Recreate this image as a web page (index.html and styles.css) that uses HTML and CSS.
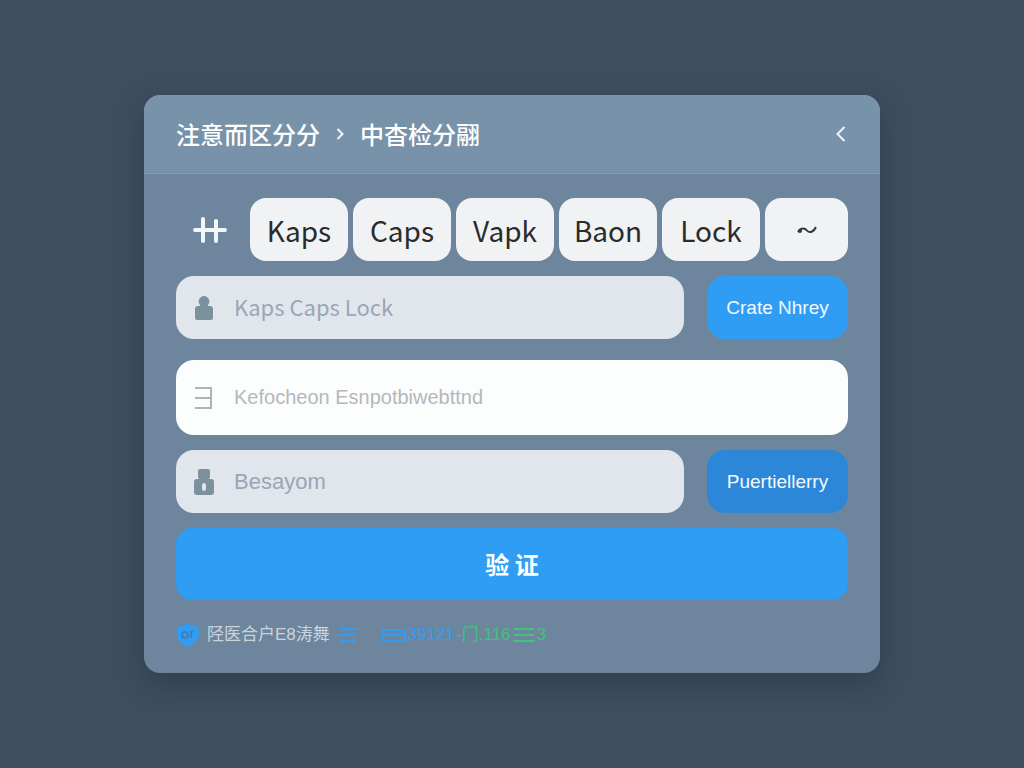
FILE: index.html
```html
<!DOCTYPE html>
<html lang="zh-CN">
<head>
    <meta charset="UTF-8">
    <meta name="viewport" content="width=device-width, initial-scale=1.0">
    <title>验证</title>
    <link rel="stylesheet" href="styles.css">
</head>
<body>
    <main class="card">
        <header class="card-header">
            <nav class="breadcrumb">
                <a href="#">注意而区分分</a>
                <svg class="separator" width="8" height="12" viewBox="0 0 8 12"><path d="M1.500 1l5 5-5 5"/></svg>
                <a href="#">中杳检分翮</a>
            </nav>
            <button class="back" type="button" aria-label="返回">
                <svg width="10" height="16" viewBox="0 0 10 16"><path d="M8.500 1L1.500 8l7 7"/></svg>
            </button>
        </header>

        <form class="card-body">
            <div class="keys">
                <svg class="keys-icon" width="34" height="26" viewBox="0 0 34 26"><path d="M2 13h30M10 2v22M23 4v20"/></svg>
                <button class="key" type="button">Kaps</button>
                <button class="key" type="button">Caps</button>
                <button class="key" type="button">Vapk</button>
                <button class="key" type="button">Baon</button>
                <button class="key" type="button">Lock</button>
                <button class="key key-small" type="button" aria-label="~">
                    <svg width="22" height="12" viewBox="0 0 22 12"><path d="M2 8C5 3 9 4 11 6.500S17 9 20 3"/><circle cx="4" cy="7" r="1"/></svg>
                </button>
            </div>

            <div class="row">
                <div class="field">
                    <label for="name" aria-label="Kaps Caps Lock">
                        <svg width="20" height="26" viewBox="0 0 20 26"><path d="M10 1a5.500 5.500 0 0 1 4 9V11h2q3 0 3 3v9q0 2-2 2H3q-2 0-2-2v-9q0-3 3-3h2v-1a5.500 5.500 0 0 1 4-9z"/></svg>
                    </label>
                    <input class="name-input" id="name" type="text" placeholder="Kaps Caps Lock">
                </div>
                <button class="side-button" type="button">Crate Nhrey</button>
            </div>

            <div class="field field-large">
                <label for="detail" aria-label="Detail">
                    <svg class="outline" width="20" height="24" viewBox="0 0 20 24"><path d="M1 2h16v20H1M1 12h16"/></svg>
                </label>
                <input id="detail" type="text" placeholder="Kefocheon Esnpotbiwebttnd">
            </div>

            <div class="row">
                <div class="field">
                    <label for="pass" aria-label="Besayom">
                        <svg width="20" height="26" viewBox="0 0 20 26"><path fill-rule="evenodd" d="M6 0h8q2 0 2 2v6q0 1-1 2h2q3 0 3 3v10q0 3-3 3H3q-3 0-3-3V13q0-3 3-3h2q-1-1-1-2V2q0-2 2-2zM10 14q-2 0-2 3v2q0 3 2 3t2-3v-2q0-3-2-3z"/></svg>
                    </label>
                    <input id="pass" type="text" placeholder="Besayom">
                </div>
                <button class="side-button side-button-dark" type="button">Puertiellerry</button>
            </div>

            <button class="submit" type="submit">验 证</button>

            <div class="status">
                <svg width="23" height="24" viewBox="0 0 23 24"><path fill="#2f9df3" d="M1 4q6 0 9-3 3-1 5 1 4 0 7 1 2 9-1 14-3 4-9 7-5-3-10-7-2-6-1-13z"/><path fill="none" stroke="#3c80bd" stroke-width="2" d="M9 9a3 3 0 1 0 0 6 3 3 0 0 0 0-6zM15 15V9l2-1"/></svg>
                <span class="status-text">陉医合户E8涛舞</span>
                <svg class="lines" width="20" height="14" viewBox="0 0 20 14"><path d="M2 1h18M0 7h18M2 13h16"/></svg>
                <span class="code">
                    <svg width="24" height="15" viewBox="0 0 24 15"><path d="M1 2h22M0 7h24M0 13h24M1 1v12M23 1v12"/></svg>
                    <span>39121</span>
                </span>
                <span class="code code-green">
                    <span>-门.116</span>
                    <svg width="22" height="14" viewBox="0 0 22 14"><path d="M1 1h20M1 7h20M0 13h22"/></svg>
                    <span>3</span>
                </span>
            </div>
        </form>
    </main>
</body>
</html>
```
FILE: styles.css
```css
* { box-sizing: border-box; }
body {
    margin: 0; min-height: 100vh; padding: 24px;
    display: flex; justify-content: center; align-items: center;
    background: #3d4e60;
    font-family: "Liberation Sans", "Noto Sans CJK SC", sans-serif;
}
button, input { font: inherit; border: 0; }
button { cursor: pointer; }
svg { display: block; flex: none; }

.card {
    width: 100%; max-width: 736px; border-radius: 16px; overflow: hidden;
    background: #6d869d; box-shadow: 0 10px 28px rgba(25, 35, 50, 0.35);
}
.card-header {
    display: flex; justify-content: space-between; align-items: center;
    height: 79px; padding: 0 32px;
    background: #7892a9; border-bottom: 1px solid #819bb0;
}
.breadcrumb {
    display: flex; align-items: center; gap: 16px;
    font: 500 24px/36px "Noto Sans CJK SC", sans-serif;
}
.breadcrumb a { color: #fff; text-decoration: none; }
.separator, .back svg { fill: none; stroke: #eef4fa; stroke-width: 2; }
.back { padding: 2px; background: none; }

.card-body { padding: 24px 32px 26px; }
.keys { display: flex; align-items: center; gap: 5px; margin-bottom: 15px; }
.keys-icon { margin: 0 18px 0 17px; fill: none; stroke: #f3f6f8; stroke-width: 4; stroke-linecap: round; }
.key {
    display: flex; justify-content: center; align-items: center;
    flex: 98 1 0; min-width: 0; height: 63px; padding: 0;
    border-radius: 16px; background: #f1f2f3; color: #292b2d;
    font: 28px/40px "Noto Sans CJK SC", sans-serif;
}
.key-small { flex-grow: 83; }
.key svg { fill: #34383b; stroke: #34383b; stroke-width: 2; }
.key svg path { fill: none; }

.row { display: flex; gap: 23px; }
.field {
    display: flex; align-items: center; gap: 20px; flex: 1; min-width: 0;
    height: 63px; padding: 0 18px; border-radius: 18px; background: #e1e5ec;
}
.field svg { fill: #7b929e; }
.field .outline { fill: none; stroke: #adb4b6; stroke-width: 2; }
.field input {
    flex: 1; min-width: 0; padding: 0; background: none; outline: 0;
    color: #53616f; font-size: 22px;
}
.field input::placeholder { color: #9ba6b4; opacity: 1; }
.field .name-input { padding-bottom: 3px; font-family: "Noto Sans CJK SC", sans-serif; }
.field-large { height: 75px; margin: 21px 0 15px; background: #fcfdfd; }
.field-large input { font-size: 20px; }
.field-large input::placeholder { color: #b4b8ba; }
.side-button {
    width: 141px; height: 63px; padding: 0; border-radius: 18px;
    background: #2f9df3; color: #f4f9ff; font-size: 19px;
}
.side-button-dark { background: #2c87d8; }
.submit {
    display: block; width: 100%; height: 72px; margin-top: 15px; padding: 0 0 2px;
    border-radius: 16px; background: #2f9df3; color: #fff;
    font: 700 24px "Noto Sans CJK SC", sans-serif;
}

.status {
    display: flex; align-items: center; gap: 8px; height: 24px; margin-top: 23px;
    font-size: 17px; line-height: 24px;
}
.status-text { color: #cbd4dc; white-space: nowrap; }
.lines { fill: none; stroke: #2f9df3; stroke-width: 2; }
.code { display: flex; align-items: center; gap: 2px; color: #2f9df3; white-space: nowrap; }
.code svg { fill: none; stroke: currentColor; stroke-width: 2; }
.lines + .code { margin-left: 16px; }
.code + .code { margin-left: -7px; }
.code-green { color: #3fc47c; }
```
